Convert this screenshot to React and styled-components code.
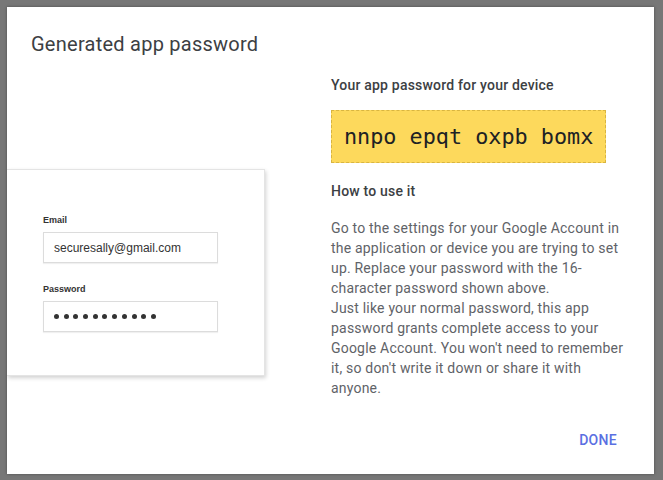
import React from 'react'
import styled, { createGlobalStyle } from 'styled-components'

const Global = createGlobalStyle`
  html, body {
    margin: 0;
    padding: 0;
    background: #777777;
  }
  body {
    font-family: Roboto, "Noto Sans", sans-serif;
  }
`

const Backdrop = styled.div`
  width: 663px;
  height: 480px;
  padding: 7px;
  box-sizing: border-box;
`

const Dialog = styled.div`
  width: 647px;
  height: 467px;
  background: #fff;
  box-sizing: border-box;
  overflow: hidden;
  display: flex;
  flex-direction: column;
  box-shadow: 0 0 3px rgba(0, 0, 0, 0.35);
`

const Title = styled.h1`
  margin: 0;
  padding: 23px 24px 0;
  font-size: 20px;
  line-height: 28px;
  font-weight: 400;
  letter-spacing: 0.25px;
  color: #3c4043;
`

const Body = styled.div`
  display: grid;
  grid-template-columns: 300px 299px;
  padding: 0 24px;
  margin-top: 17px;
`

const Illustration = styled.div`
  margin: 94px 0 0 -24px;
  width: 258px;
  height: 207px;
  box-sizing: border-box;
  background: #fff;
  border: 1px solid #e4e4e4;
  border-left: none;
  box-shadow: 1px 2px 4px rgba(0, 0, 0, 0.18);
  padding: 44px 0 0 36px;
  font-family: "Liberation Sans", Arial, sans-serif;
`

const FieldLabel = styled.div`
  font-size: 9px;
  line-height: 12px;
  font-weight: 700;
  color: #333;
  margin-top: ${p => p.$gap || 0}px;
`

const FieldBox = styled.div`
  width: 175px;
  height: 31px;
  box-sizing: border-box;
  margin-top: 6px;
  border: 1px solid #dcdcdc;
  box-shadow: 0 1px 1px rgba(0, 0, 0, 0.06);
  display: flex;
  align-items: center;
  padding-left: 10px;
  font-size: 12px;
  color: #333;
`

const Dots = styled.div`
  display: flex;
  gap: 4.7px;
`

const Dot = styled.span`
  width: 5px;
  height: 5px;
  border-radius: 50%;
  background: #333;
`

const Info = styled.div`
  display: flex;
  flex-direction: column;
  align-items: flex-start;
`

const Heading = styled.h2`
  margin: 0;
  font-size: 14px;
  line-height: 20px;
  font-weight: 500;
  letter-spacing: 0.2px;
  color: #3c4043;
`

const PasswordBox = styled.div`
  margin: 15px 0 18px;
  padding: 10px 12px 10px 12px;
  background: #fdd95c;
  border: 1px dashed #d9b540;
  font-family: "DejaVu Sans Mono", "Liberation Mono", monospace;
  font-size: 21.8px;
  line-height: 31px;
  color: #202124;
  white-space: pre;
`

const Text = styled.p`
  margin: 17px 0 0;
  font-size: 14px;
  line-height: 20px;
  letter-spacing: 0.2px;
  color: #5f6368;
`

const Footer = styled.div`
  display: flex;
  justify-content: flex-end;
  padding: 0 29px 0 0;
  margin-top: 24px;
`

const DoneButton = styled.button`
  height: 36px;
  padding: 0 8px;
  border: none;
  background: transparent;
  font-family: Roboto, "Noto Sans", sans-serif;
  font-size: 14px;
  font-weight: 500;
  letter-spacing: 0.3px;
  color: #5a6fe2;
  cursor: pointer;
`

function App() {
  return (
    <Backdrop>
      <Global />
      <Dialog>
        <Title>Generated app password</Title>
        <Body>
          <Illustration>
            <FieldLabel>Email</FieldLabel>
            <FieldBox>securesally@gmail.com</FieldBox>
            <FieldLabel $gap={20}>Password</FieldLabel>
            <FieldBox>
              <Dots>
                {Array.from({ length: 11 }).map((_, i) => <Dot key={i} />)}
              </Dots>
            </FieldBox>
          </Illustration>
          <Info>
            <Heading>Your app password for your device</Heading>
            <PasswordBox>nnpo epqt oxpb bomx</PasswordBox>
            <Heading>How to use it</Heading>
            <Text>
              Go to the settings for your Google Account in the application or device you are trying to set up. Replace your password with the 16-character password shown above.
              <br />
              Just like your normal password, this app password grants complete access to your Google Account. You won't need to remember it, so don't write it down or share it with anyone.
            </Text>
          </Info>
        </Body>
        <Footer>
          <DoneButton>DONE</DoneButton>
        </Footer>
      </Dialog>
    </Backdrop>
  )
}

export default App
